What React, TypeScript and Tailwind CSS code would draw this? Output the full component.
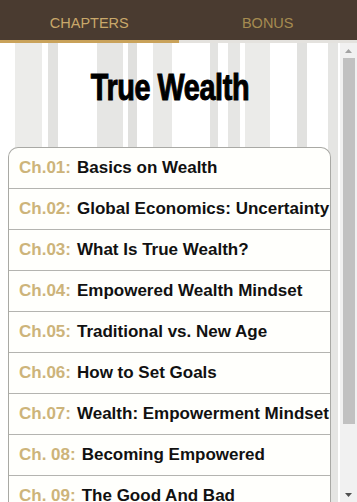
import React from 'react';

const chapters = [
  { label: 'Ch.01:', title: 'Basics on Wealth' },
  { label: 'Ch.02:', title: 'Global Economics: Uncertainty' },
  { label: 'Ch.03:', title: 'What Is True Wealth?' },
  { label: 'Ch.04:', title: 'Empowered Wealth Mindset' },
  { label: 'Ch.05:', title: 'Traditional vs. New Age' },
  { label: 'Ch.06:', title: 'How to Set Goals' },
  { label: 'Ch.07:', title: 'Wealth: Empowerment Mindset' },
  { label: 'Ch. 08:', title: 'Becoming Empowered' },
  { label: 'Ch. 09:', title: 'The Good And Bad' },
  { label: 'Ch. 10:', title: 'Wealth Habits' },
];

// background stripes: [x, width, colour]
const stripes: [number, number, string][] = [
  [15, 27, '#ececea'],
  [48, 10, '#e2e2e0'],
  [97, 26, '#e6e6e4'],
  [128, 9, '#e0e0de'],
  [153, 19, '#e9e9e7'],
  [210, 8, '#e3e3e1'],
  [228, 12, '#e6e6e4'],
  [245, 25, '#ebebe9'],
  [297, 10, '#e1e1df'],
  [328, 10, '#e5e5e3'],
];

function Stripes() {
  return (
    <svg className="absolute inset-0 h-full w-full" width="340" height="460" preserveAspectRatio="none">
      {stripes.map(([x, w, c]) => (
        <rect key={x} x={x} y={0} width={w} height={460} fill={c} />
      ))}
    </svg>
  );
}

function ChapterRow({ label, title }: { label: string; title: string }) {
  return (
    <div className="flex h-[41px] shrink-0 items-center whitespace-nowrap border-b border-[#b4b4b0] pl-[10px] text-[17px] font-bold">
      <span className="text-[#cdb47a]">{label}</span>
      <span className="ml-[6px] text-[#111]">{title}</span>
    </div>
  );
}

function Scrollbar() {
  return (
    <div className="flex w-[17px] shrink-0 flex-col items-center bg-[#f1f1f1]">
      <div className="flex h-[15px] items-center justify-center">
        <svg width="7" height="4" viewBox="0 0 7 4">
          <path d="M0 4 L3.5 0 L7 4 Z" fill="#a3a3a3" />
        </svg>
      </div>
      <div className="h-[366px] w-[12px] bg-[#c1c1c1]" />
      <div className="flex-1" />
      <div className="flex h-[15px] items-center justify-center">
        <svg width="7" height="4" viewBox="0 0 7 4">
          <path d="M0 0 L7 0 L3.5 4 Z" fill="#505050" />
        </svg>
      </div>
    </div>
  );
}

export default function App() {
  return (
    <div
      className="flex h-[502px] w-[357px] flex-col overflow-hidden bg-white"
      style={{ fontFamily: '"Liberation Sans", Arial, sans-serif' }}
    >
      <div className="flex h-[43px] shrink-0 bg-[#4a3b30]">
        <div className="flex flex-1 flex-col">
          <div className="flex flex-1 items-center justify-center pt-[7px] text-[14.5px] text-[#c9a86a]">
            CHAPTERS
          </div>
          <div className="h-[3px] bg-[#c9a25a]" />
        </div>
        <div className="flex flex-1 flex-col">
          <div className="flex flex-1 items-center justify-center pt-[7px] text-[14.5px] text-[#a68b50]">
            BONUS
          </div>
          <div className="h-[3px] bg-[#e4e2de]" />
        </div>
      </div>
      <div className="flex min-h-0 flex-1">
        <div className="relative flex min-w-0 flex-1 flex-col overflow-hidden">
          <Stripes />
          <div className="relative flex h-[104px] shrink-0 items-center justify-center pb-[14px]">
            <h1
              className="inline-block scale-x-[0.8] text-[36px] font-bold leading-none tracking-[-0.5px] text-black [-webkit-text-stroke:1px_black]"
              style={{ fontFamily: 'Impact, "Liberation Sans", Arial, sans-serif' }}
            >
              True Wealth
            </h1>
          </div>
          <div className="relative ml-[8px] mr-[9px] flex flex-col rounded-t-[10px] border border-b-0 border-[#a9a9a5] bg-[#fffffc]">
            {chapters.map((c) => (
              <ChapterRow key={c.label} label={c.label} title={c.title} />
            ))}
          </div>
        </div>
        <Scrollbar />
      </div>
    </div>
  );
}
